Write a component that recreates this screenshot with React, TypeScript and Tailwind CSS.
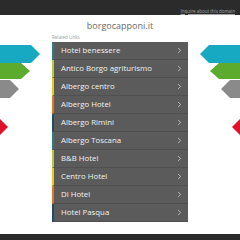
import { ChevronRight } from "lucide-react";

const LINKS = [
  "Hotel benessere",
  "Antico Borgo agriturismo",
  "Albergo centro",
  "Albergo Hotel",
  "Albergo Rimini",
  "Albergo Toscana",
  "B&B Hotel",
  "Centro Hotel",
  "Di Hotel",
  "Hotel Pasqua",
];

// left accent cycles through 5 colours
const ACCENTS = ["border-l-[#27807f]", "border-l-[#b7c93a]", "border-l-[#f0c419]", "border-l-[#e5761f]", "border-l-[#1d4e63]"];

function LeftArrows() {
  return (
    <svg className="absolute left-0 top-[45px]" width="44" height="92" viewBox="0 0 44 92">
      <polygon points="0,0 31,0 40,9 31,18 0,18" fill="#16a9c1" />
      <polygon points="0,18 21,18 30,26 21,34 0,34" fill="#5cab2f" />
      <polygon points="0,35 10,35 19,44 10,53 0,53" fill="#8a8a8a" />
      <polygon points="0,74 8,82 0,90" fill="#e0112b" />
    </svg>
  );
}

function RightArrows() {
  return (
    <svg className="absolute right-0 top-[45px]" width="44" height="92" viewBox="0 0 44 92">
      <polygon points="44,0 13,0 4,9 13,18 44,18" fill="#16a9c1" />
      <polygon points="44,18 23,18 14,26 23,34 44,34" fill="#5cab2f" />
      <polygon points="44,35 34,35 25,44 34,53 44,53" fill="#8a8a8a" />
      <polygon points="44,74 36,82 44,90" fill="#e0112b" />
    </svg>
  );
}

export default function App() {
  return (
    <div className="relative flex h-[240px] w-[240px] flex-col overflow-hidden bg-white font-['Open_Sans',sans-serif]">
      {/* top bar */}
      <div className="flex h-[15px] items-end justify-end bg-[#2b2b2b] px-[5px] pb-[2px]">
        <span className="text-[4.5px] leading-none text-[#a5a5a5] underline">Inquire about this domain</span>
      </div>

      <LeftArrows />
      <RightArrows />

      <div className="flex flex-1 flex-col items-center">
        <h1 className="mt-[5px] text-[9px] leading-[12px] text-[#6b6b6b]">borgocapponi.it</h1>
        <div className="mt-[3px] w-[136px]">
          <p className="mb-[2px] text-[4.5px] leading-[5px] text-[#9a9a9a]">Related Links</p>
          <ul className="flex flex-col bg-[#5b5b5b]">
            {LINKS.map((l, i) => (
              <li
                key={l}
                className={`flex h-[18px] items-center justify-between border-b border-b-[#505050] border-l-2 pl-[7px] pr-[4px] ${ACCENTS[i % 5]}`}
              >
                <span className="text-[7.8px] leading-none text-[#f2f2f2]">{l}</span>
                <ChevronRight className="h-[9px] w-[9px] text-[#d8d8d8]" strokeWidth={2} />
              </li>
            ))}
          </ul>
        </div>
      </div>

      <div className="h-[6px] bg-[#2b2b2b]" />
    </div>
  );
}
